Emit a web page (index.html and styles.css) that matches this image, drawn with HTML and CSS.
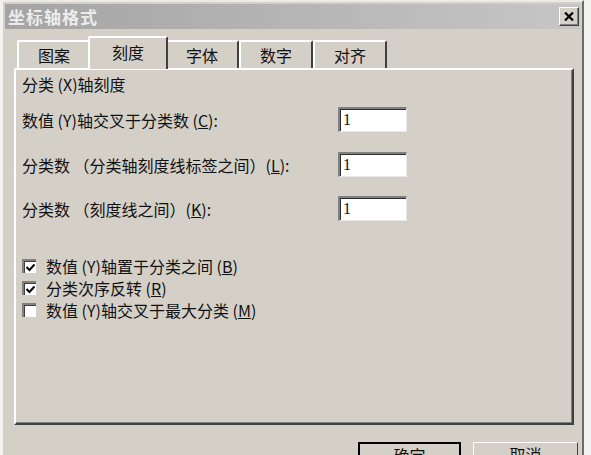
FILE: index.html
```html
<!DOCTYPE html>
<html lang="zh">
<head>
<meta charset="utf-8">
<link rel="stylesheet" href="styles.css">
</head>
<body>
<div class="win">
  <div class="titlebar">
    <span class="title">坐标轴格式</span>
    <span class="close"><svg width="10" height="9" viewBox="0 0 10 9"><path d="M1 0.5 L9 8.5 M9 0.5 L1 8.5" stroke="#000" stroke-width="2.2" fill="none"/></svg></span>
  </div>
  <div class="tabs">
    <div class="tab">图案</div>
    <div class="tab active">刻度</div>
    <div class="tab">字体</div>
    <div class="tab">数字</div>
    <div class="tab">对齐</div>
  </div>
  <div class="panel">
    <div class="heading">分类 (X)轴刻度</div>
    <div class="field">
      <span class="label">数值 (Y)轴交叉于分类数 (<u>C</u>):</span>
      <span class="input">1</span>
    </div>
    <div class="field">
      <span class="label">分类数 （分类轴刻度线标签之间）(<u>L</u>):</span>
      <span class="input">1</span>
    </div>
    <div class="field">
      <span class="label">分类数 （刻度线之间）(<u>K</u>):</span>
      <span class="input">1</span>
    </div>
    <div class="checks">
      <div class="check"><span class="box"><svg width="9" height="9" viewBox="0 0 9 9"><path d="M0.5 4 L3.5 7 L8.5 1.5" stroke="#000" stroke-width="2" fill="none"/></svg></span>数值 (Y)轴置于分类之间 (<u>B</u>)</div>
      <div class="check"><span class="box"><svg width="9" height="9" viewBox="0 0 9 9"><path d="M0.5 4 L3.5 7 L8.5 1.5" stroke="#000" stroke-width="2" fill="none"/></svg></span>分类次序反转 (<u>R</u>)</div>
      <div class="check"><span class="box"></span>数值 (Y)轴交叉于最大分类 (<u>M</u>)</div>
    </div>
  </div>
  <div class="actions">
    <div class="btn default"><span>确定</span></div>
    <div class="btn"><span>取消</span></div>
  </div>
</div>
</body>
</html>
```
FILE: styles.css
```css
html, body {
  margin: 0;
  padding: 0;
  background: #f2f2f0;
  overflow: hidden;
}
.win {
  box-sizing: border-box;
  width: 584px;
  height: 455px;
  background: #d4d0c8;
  border-top: 2px solid #ecebe6;
  border-left: 3px solid #f4f3ef;
  border-right: 2px solid #6b6b6b;
  padding: 2px 2px 0 2px;
  font-family: "Noto Sans CJK SC", "Liberation Sans", sans-serif;
  font-size: 16px;
  color: #111;
  overflow: hidden;
}
.titlebar {
  height: 25px;
  background: linear-gradient(to right, #a4a4a4, #c6c6c6);
  display: flex;
  align-items: center;
  justify-content: space-between;
  padding: 0 0 0 3px;
}
.title {
  color: #ececec;
  font-weight: bold;
  font-size: 17px;
  letter-spacing: 1px;
  line-height: 25px;
}
.close {
  box-sizing: border-box;
  width: 20px;
  height: 19px;
  background: #d4d0c8;
  border-top: 1px solid #fff;
  border-left: 1px solid #fff;
  border-right: 1px solid #404040;
  border-bottom: 1px solid #404040;
  box-shadow: inset -1px -1px 0 #808080;
  display: flex;
  align-items: center;
  justify-content: center;
  margin-right: 1px;
}
.tabs {
  display: flex;
  align-items: flex-end;
  height: 39px;
  padding-left: 12px;
}
.tab {
  box-sizing: border-box;
  width: 74px;
  height: 28px;
  border-top: 2px solid #fff;
  border-left: 2px solid #fff;
  border-right: 2px solid #404040;
  border-radius: 2px 2px 0 0;
  text-align: center;
  line-height: 26px;
}
.tab.active {
  width: 80px;
  height: 33px;
  margin: 0 -3px;
  position: relative;
  z-index: 1;
  background: #d4d0c8;
  line-height: 28px;
  margin-bottom: -1px;
  border-right-color: #404040;
}
.panel {
  box-sizing: border-box;
  margin: 0 6px 0 9px;
  height: 357px;
  border-top: 2px solid #fff;
  border-left: 2px solid #fff;
  border-right: 2px solid #404040;
  border-bottom: 2px solid #404040;
  box-shadow: inset -1px -1px 0 #808080;
  padding: 4px 0 0 6px;
}
.heading {
  line-height: 20px;
}
.field {
  display: flex;
  align-items: center;
  height: 25px;
  margin-top: 13px;
}
.field + .field {
  margin-top: 20px;
}
.field + .field + .field {
  margin-top: 19px;
}
.label {
  width: 316px;
}
.label u, .check u {
  text-decoration: underline;
}
.input {
  box-sizing: border-box;
  width: 69px;
  height: 25px;
  background: #fff;
  border-top: 2px solid #808080;
  border-left: 2px solid #808080;
  border-right: 1px solid #e8e8e8;
  border-bottom: 1px solid #e8e8e8;
  box-shadow: inset 1px 1px 0 #303030;
  font-family: "Liberation Serif", serif;
  font-size: 16px;
  line-height: 21px;
  padding-left: 3px;
}
.checks {
  margin-top: 34px;
  display: flex;
  flex-direction: column;
}
.check {
  display: flex;
  align-items: center;
  height: 22px;
}
.box {
  box-sizing: border-box;
  width: 14px;
  height: 14px;
  background: #fff;
  border-top: 2px solid #808080;
  border-left: 2px solid #808080;
  box-shadow: inset 1px 1px 0 #404040;
  display: flex;
  align-items: center;
  justify-content: center;
  margin-right: 10px;
}
.actions {
  display: flex;
  justify-content: flex-end;
  gap: 12px;
  padding: 17px 2px 0 0;
}
.btn {
  box-sizing: border-box;
  width: 105px;
  height: 26px;
  border-top: 1px solid #fff;
  border-left: 1px solid #fff;
  border-right: 1px solid #404040;
  border-bottom: 1px solid #404040;
  text-align: center;
  line-height: 22px;
  font-size: 16px;
}
.btn.default {
  border: 2px solid #000;
  width: 103px;
}
```
